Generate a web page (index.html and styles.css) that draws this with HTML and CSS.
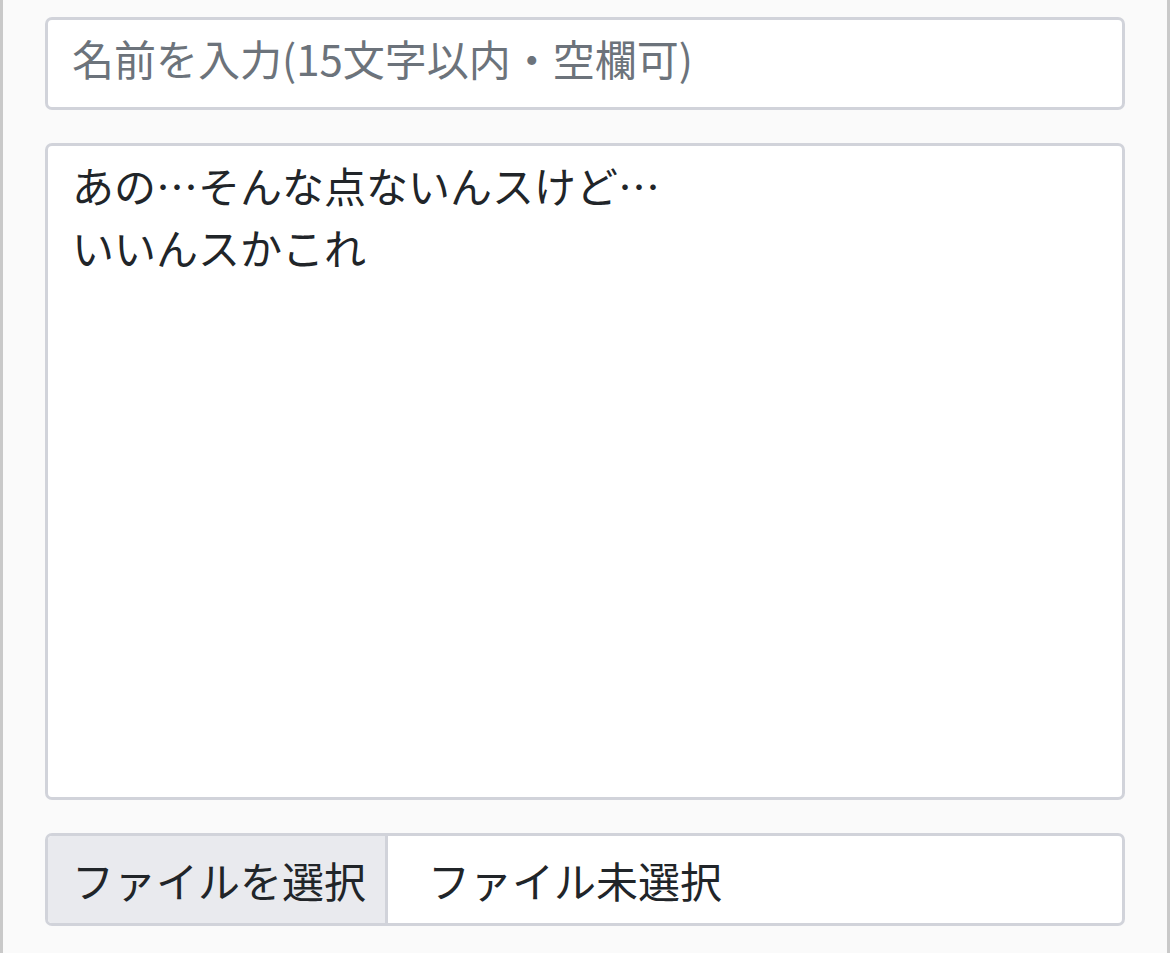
FILE: index.html
```html
<!DOCTYPE html>
<html lang="ja">
<head>
  <meta charset="UTF-8">
  <meta name="viewport" content="width=device-width, initial-scale=1.0">
  <title>投稿フォーム</title>
  <link rel="stylesheet" href="styles.css">
</head>
<body>
  <form class="post-form">
    <input type="text" class="form-control" placeholder="名前を入力(15文字以内・空欄可)">
    <textarea class="form-control form-textarea">あの…そんな点ないんスけど…
いいんスかこれ</textarea>
    <label class="file-input">
      <span class="file-button">ファイルを選択</span>
      <span class="file-name">ファイル未選択</span>
    </label>
  </form>
</body>
</html>
```

FILE: styles.css
```css
/* Base */
html, body {
  height: 100%;
}

body {
  margin: 0;
  font-family: "Noto Sans CJK JP", "Noto Sans", sans-serif;
  color: #212529;
  background: #fafafa;
  border-left: 3px solid #c9c9c9;
  border-right: 3px solid #c9c9c9;
  box-sizing: border-box;
}

/* Form */
.post-form {
  display: flex;
  flex-direction: column;
  gap: 33px;
  padding: 17px 42px 0;
}

.form-control {
  display: block;
  width: 100%;
  box-sizing: border-box;
  height: 93px;
  margin: 0;
  padding: 6px 24px 18px;
  font-family: inherit;
  font-size: 42px;
  line-height: 63px;
  color: #212529;
  background: #ffffff;
  border: 3px solid #d1d3da;
  border-radius: 7px;
  outline: none;
}

.form-control::placeholder {
  color: #6c737b;
}

.form-textarea {
  height: 657px;
  padding-top: 8px;
  line-height: 62px;
  resize: none;
}

/* File picker */
.file-input {
  display: flex;
  height: 93px;
  box-sizing: border-box;
  background: #ffffff;
  border: 3px solid #d1d3da;
  border-radius: 7px;
  overflow: hidden;
  font-size: 42px;
  line-height: 63px;
}

.file-button {
  display: flex;
  align-items: center;
  padding: 0 19px 0 24px;
  background: #e9eaee;
  border-right: 3px solid #d1d3da;
}

.file-name {
  display: flex;
  align-items: center;
  padding-left: 40px;
}
```
